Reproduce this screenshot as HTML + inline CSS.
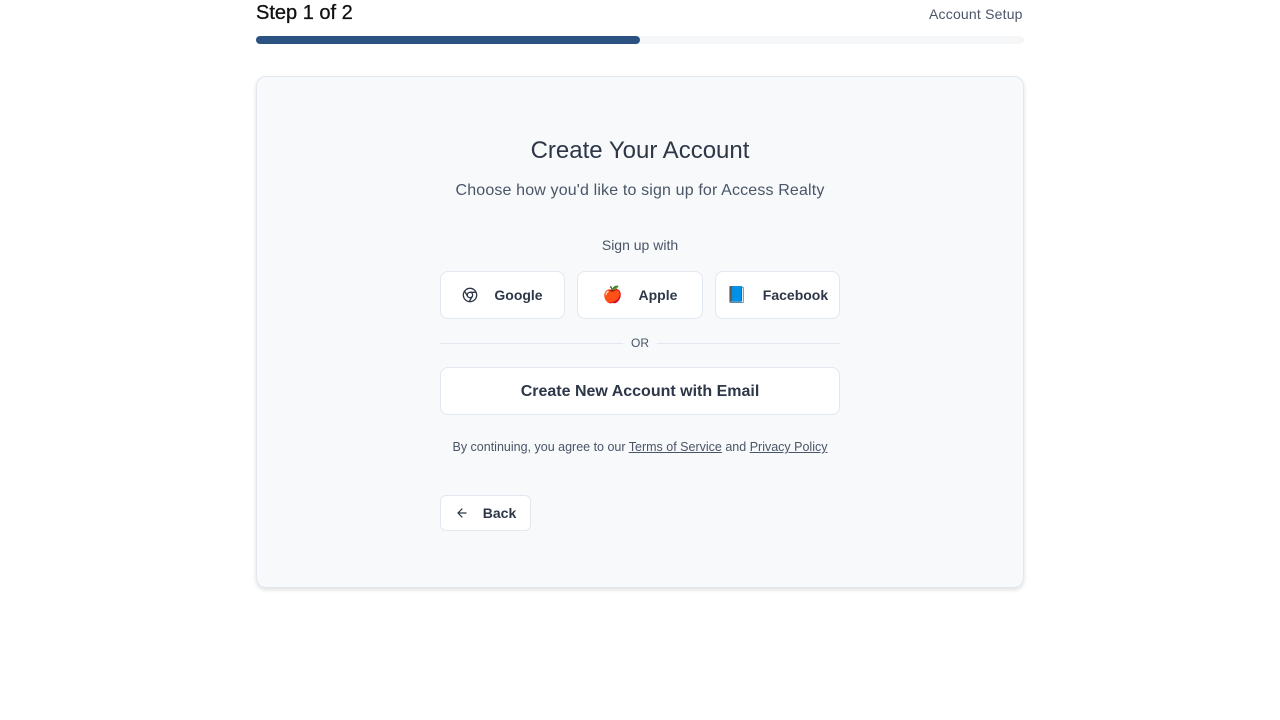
<!DOCTYPE html>
<html><head><meta charset="utf-8"><style>
*{box-sizing:border-box;margin:0;padding:0}
body{width:1280px;height:720px;background:#fff;font-family:"Liberation Sans",sans-serif;position:relative;color:#2d3748}
.a{position:absolute}
.btn{position:absolute;background:#fff;border:1px solid #e2e8f0;border-radius:8px;display:flex;align-items:center;justify-content:center;font-size:14px;font-weight:bold;color:#2d3748}
</style></head><body>
<div class="a" style="left:256px;top:2px;font-size:20px;color:#111;-webkit-text-stroke:0.3px #111">Step 1 of 2</div>
<div class="a" style="left:929px;top:6px;font-size:14px;color:#4a5568;letter-spacing:0.2px">Account Setup</div>
<div class="a" style="left:256px;top:36px;width:768px;height:8px;background:#f5f6f7;border-radius:4px"></div>
<div class="a" style="left:256px;top:36px;width:384px;height:8px;background:#2c5282;border-radius:4px"></div>
<div class="a" style="left:256px;top:76px;width:768px;height:512px;background:#f7f9fa;border:1px solid #e2e8f0;border-radius:10px;box-shadow:0 2px 4px rgba(0,0,0,.12)"></div>
<div class="a" style="left:256px;width:768px;top:137px;text-align:center;font-size:24px;color:#2d3748">Create Your Account</div>
<div class="a" style="left:256px;width:768px;top:182px;text-align:center;font-size:16px;color:#4a5568;letter-spacing:0.15px">Choose how you'd like to sign up for Access Realty</div>
<div class="a" style="left:256px;width:768px;top:237px;text-align:center;font-size:14px;color:#4a5568">Sign up with</div>
<div class="btn" style="left:440px;top:271px;width:125px;height:48px"><svg width="16" height="16" viewBox="0 0 24 24" fill="none" stroke="#2d3748" stroke-width="2" style="margin-right:16px"><circle cx="12" cy="12" r="10"/><circle cx="12" cy="12" r="4"/><path d="M21.2 8H12M3.9 6.1l4.6 8M10.9 21.9l4.6-8"/></svg>Google</div>
<div class="btn" style="left:577px;top:271px;width:126px;height:48px"><span style="margin-right:16px;font-size:16px">🍎</span>Apple</div>
<div class="btn" style="left:715px;top:271px;width:125px;height:48px"><span style="margin-right:16px;font-size:16px">📘</span>Facebook</div>
<div class="a" style="left:440px;top:343px;width:400px;height:1px;background:#e2e8f0"></div>
<div class="a" style="left:623px;top:336px;width:34px;text-align:center;background:#f7f9fa;font-size:12px;color:#4a5568">OR</div>
<div class="btn" style="left:440px;top:367px;width:400px;height:48px;font-size:16px;padding-top:2px">Create New Account with Email</div>
<div class="a" style="left:256px;width:768px;top:440px;text-align:center;font-size:12.5px;color:#4a5568">By continuing, you agree to our <u>Terms of Service</u> and <u>Privacy Policy</u></div>
<div class="btn" style="left:440px;top:495px;width:91px;height:36px;border-radius:6px"><svg width="14" height="14" viewBox="0 0 24 24" fill="none" stroke="#2d3748" stroke-width="2" stroke-linecap="round" stroke-linejoin="round" style="margin-right:14px"><path d="M19 12H5M12 19l-7-7 7-7"/></svg>Back</div>
</body></html>
